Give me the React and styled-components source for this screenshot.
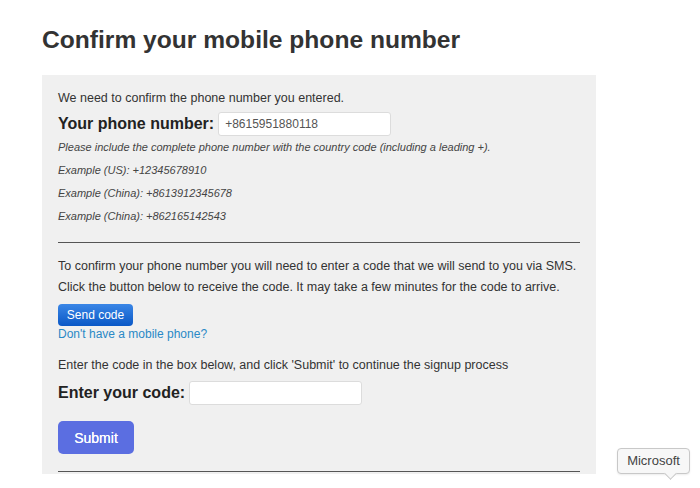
import React from 'react';
import styled, { createGlobalStyle } from 'styled-components';

const GlobalStyle = createGlobalStyle`
  html, body { margin: 0; padding: 0; background: #fff; }
  body { font-family: "Liberation Sans", Arial, Helvetica, sans-serif; color: #333; }
`;

const Page = styled.div`
  position: relative; width: 700px; height: 488px; overflow: hidden;
  padding: 26px 0 0 42px; box-sizing: border-box;
`;

const Title = styled.h1`
  margin: 0 0 21px; font-size: 24.6px; line-height: 28px; font-weight: bold; color: #333;
`;

const Panel = styled.div`
  width: 554px; box-sizing: border-box; background: #f0f0f0;
  padding: 15px 16px 2px;
`;

const Text = styled.p`
  margin: ${p => p.$mt || 0}px 0 0; font-size: 12.5px; line-height: ${p => p.$lh || 16}px; color: #333;
`;

const Notes = styled.div`
  font-size: 11px; line-height: 23px; font-style: italic; color: #444;
`;

const Row = styled.div`
  display: flex; align-items: center; gap: 4px; height: 24px; margin-top: ${p => p.$mt}px;
`;

const Label = styled.span`
  font-size: 16px; font-weight: bold; color: #222;
`;

const Input = styled.input`
  box-sizing: border-box; width: 173px; height: 24px; border: 1px solid #dcdcdc; border-radius: 3px;
  background: #fff; padding: 0 6px; font-family: inherit; font-size: 12px; color: #555;
  outline: none;
`;

const Rule = styled.hr`
  margin: ${p => p.$mt}px 0 0; border: none; border-top: 1px solid #555; height: 0;
`;

const SendButton = styled.button`
  display: block; margin-top: 6px; width: 75px; height: 22px; border: none; border-radius: 4px;
  background: linear-gradient(#3a86e6, #0a58c6); color: #fff; font-family: inherit; font-size: 12px;
  padding: 0; cursor: pointer;
`;

const Link = styled.a`
  display: block; font-size: 12px; line-height: 16px; color: #2a89c6; text-decoration: none; cursor: pointer;
`;

const SubmitButton = styled.button`
  display: block; margin-top: 16px; width: 76px; height: 33px; border: none; border-radius: 5px;
  background: #5b6ee1; color: #fff; font-family: inherit; font-size: 14px; padding: 0; cursor: pointer;
  text-shadow: 0 0 0.4px #fff;
`;

const Tooltip = styled.div`
  position: absolute; left: 617px; top: 448px; width: 73px; height: 26px; box-sizing: border-box;
  border: 1px solid #c8c8c8; border-radius: 4px; background: #f7f7f7;
  font-size: 13px; line-height: 24px; color: #444; text-align: center;
  box-shadow: 0 1px 2px rgba(0,0,0,0.08);
  &::after {
    content: ''; position: absolute; left: 48px; bottom: -5px; width: 8px; height: 8px;
    background: #f7f7f7; border-right: 1px solid #c8c8c8; border-bottom: 1px solid #c8c8c8;
    transform: rotate(45deg);
  }
`;

export default function App() {
  return (
    <>
      <GlobalStyle />
      <Page>
        <Title>Confirm your mobile phone number</Title>
        <Panel>
          <Text>We need to confirm the phone number you entered.</Text>
          <Row $mt={6}>
            <Label>Your phone number:</Label>
            <Input defaultValue="+8615951880118" />
          </Row>
          <Notes>
            <div>Please include the complete phone number with the country code (including a leading +).</div>
            <div>Example (US): +12345678910</div>
            <div>Example (China): +8613912345678</div>
            <div>Example (China): +862165142543</div>
          </Notes>
          <Rule $mt={14} />
          <Text $mt={13} $lh={21}>
            To confirm your phone number you will need to enter a code that we will send to you via SMS.<br />
            Click the button below to receive the code. It may take a few minutes for the code to arrive.
          </Text>
          <SendButton>Send code</SendButton>
          <Link>Don't have a mobile phone?</Link>
          <Text $mt={15}>Enter the code in the box below, and click 'Submit' to continue the signup process</Text>
          <Row $mt={8}>
            <Label>Enter your code:</Label>
            <Input />
          </Row>
          <SubmitButton>Submit</SubmitButton>
          <Rule $mt={17} />
        </Panel>
        <Tooltip>Microsoft</Tooltip>
      </Page>
    </>
  );
}
